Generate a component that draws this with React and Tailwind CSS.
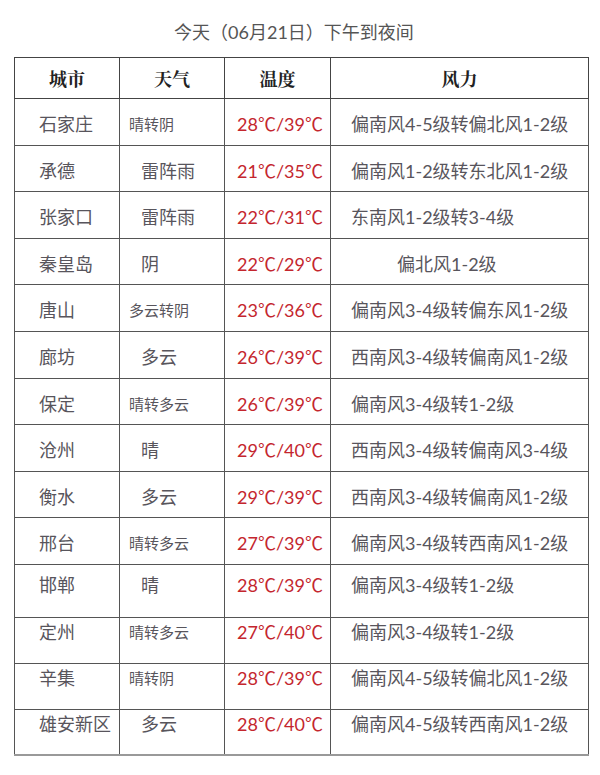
import React from "react";

const rows = [
  { city: "石家庄", weather: "晴转阴", small: true, temp: "28℃/39℃", wind: "偏南风4-5级转偏北风1-2级" },
  { city: "承德", weather: "雷阵雨", temp: "21℃/35℃", wind: "偏南风1-2级转东北风1-2级" },
  { city: "张家口", weather: "雷阵雨", temp: "22℃/31℃", wind: "东南风1-2级转3-4级" },
  { city: "秦皇岛", weather: "阴", temp: "22℃/29℃", wind: "偏北风1-2级", indent: true },
  { city: "唐山", weather: "多云转阴", small: true, temp: "23℃/36℃", wind: "偏南风3-4级转偏东风1-2级" },
  { city: "廊坊", weather: "多云", temp: "26℃/39℃", wind: "西南风3-4级转偏南风1-2级" },
  { city: "保定", weather: "晴转多云", small: true, temp: "26℃/39℃", wind: "偏南风3-4级转1-2级" },
  { city: "沧州", weather: "晴", temp: "29℃/40℃", wind: "西南风3-4级转偏南风3-4级" },
  { city: "衡水", weather: "多云", temp: "29℃/39℃", wind: "西南风3-4级转偏南风1-2级" },
  { city: "邢台", weather: "晴转多云", small: true, temp: "27℃/39℃", wind: "偏南风3-4级转西南风1-2级" },
  { city: "邯郸", weather: "晴", temp: "28℃/39℃", wind: "偏南风3-4级转1-2级", kind: "tall" },
  { city: "定州", weather: "晴转多云", small: true, temp: "27℃/40℃", wind: "偏南风3-4级转1-2级", kind: "top" },
  { city: "辛集", weather: "晴转阴", small: true, temp: "28℃/39℃", wind: "偏南风4-5级转偏北风1-2级", kind: "top" },
  { city: "雄安新区", weather: "多云", temp: "28℃/40℃", wind: "偏南风4-5级转西南风1-2级", kind: "top" },
];

// row height + how far down the text sits in each cell
const rowStyles = {
  mid: { tr: "h-[46.6px]", td: "pt-[13px]" },
  tall: { tr: "h-[53px]", td: "pt-[8px]" },
  top: { tr: "h-[46px]", td: "pt-[2px]" },
};

const font = "font-['Lato','Noto_Sans_CJK_SC',sans-serif]";

export default function App() {
  return (
    <div className={`min-h-screen bg-white ${font}`}>
      <h1 className="pt-[22px] pr-[12px] text-center text-[18px] leading-[20px] text-[#555]">
        今天（06月21日）下午到夜间
      </h1>

      <table className="mt-[15px] ml-[14px] w-[574px] table-fixed border-collapse">
        <colgroup>
          <col className="w-[105px]" />
          <col className="w-[105px]" />
          <col className="w-[106px]" />
          <col className="w-[258px]" />
        </colgroup>
        <thead>
          <tr className="h-[41px] font-['Noto_Serif_CJK_SC','Noto_Sans_CJK_SC',serif] text-[18px] font-bold text-[#222]">
            <th className="border border-[#444]">城市</th>
            <th className="border border-[#444]">天气</th>
            <th className="border border-[#444]">温度</th>
            <th className="border border-[#444]">风力</th>
          </tr>
        </thead>
        <tbody className="text-[18px] leading-[24px] text-[#58555c]">
          {rows.map((row, i) => {
            const s = rowStyles[row.kind || "mid"];
            const last = i === rows.length - 1;
            const cell = `border border-[#555] align-top ${s.td} ${
              last ? "border-b-2 border-b-[#999]" : ""
            }`;
            return (
              <tr key={row.city} className={s.tr}>
                <td className={`${cell} pl-[24px] whitespace-nowrap`}>{row.city}</td>
                <td
                  className={`${cell} whitespace-nowrap ${
                    row.small ? "pl-[9px] text-[15px]" : "pl-[21px]"
                  }`}
                >
                  {row.weather}
                </td>
                <td className={`${cell} pl-[12px] whitespace-nowrap text-[#c4262e]`}>
                  {row.temp}
                </td>
                <td
                  className={`${cell} whitespace-nowrap ${
                    row.indent ? "pl-[66px]" : "pl-[20px]"
                  }`}
                >
                  {row.wind}
                </td>
              </tr>
            );
          })}
        </tbody>
      </table>
    </div>
  );
}
